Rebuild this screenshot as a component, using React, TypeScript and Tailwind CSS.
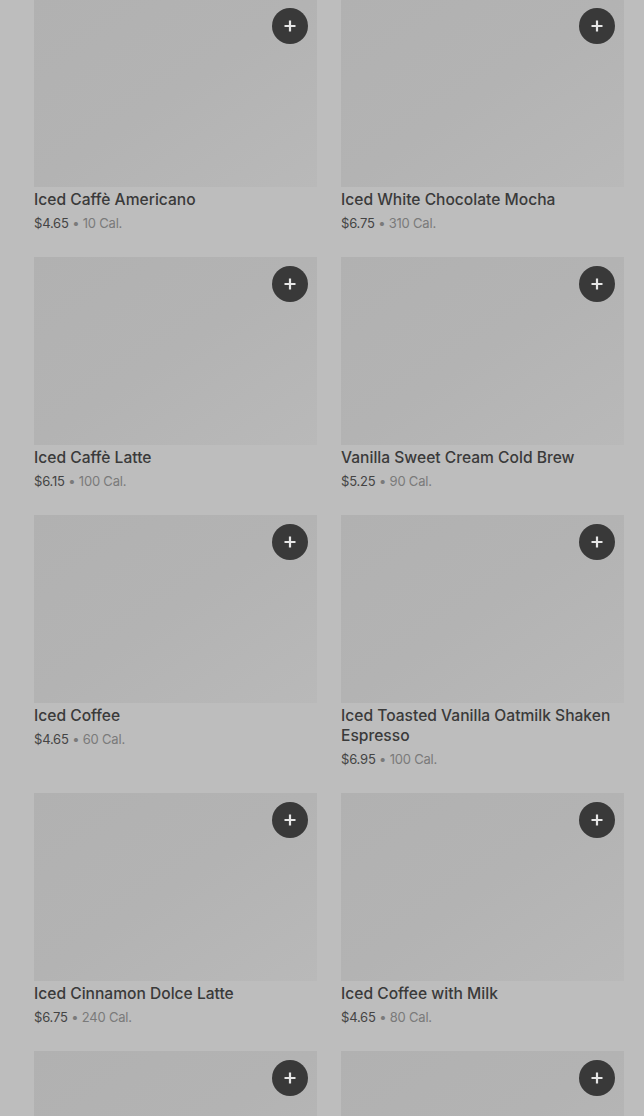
import React from "react";

type Item = { name: string; price: string; cal: string };

const items: Item[] = [
	{ name: "Iced Caffè Americano", price: "$4.65", cal: "10 Cal." },
	{ name: "Iced White Chocolate Mocha", price: "$6.75", cal: "310 Cal." },
	{ name: "Iced Caffè Latte", price: "$6.15", cal: "100 Cal." },
	{ name: "Vanilla Sweet Cream Cold Brew", price: "$5.25", cal: "90 Cal." },
	{ name: "Iced Coffee", price: "$4.65", cal: "60 Cal." },
	{ name: "Iced Toasted Vanilla Oatmilk Shaken Espresso", price: "$6.95", cal: "100 Cal." },
	{ name: "Iced Cinnamon Dolce Latte", price: "$6.75", cal: "240 Cal." },
	{ name: "Iced Coffee with Milk", price: "$4.65", cal: "80 Cal." },
];

function PlusIcon() {
	return (
		<svg width="14" height="14" viewBox="0 0 14 14" fill="none">
			<path d="M7 1.5v11M1.5 7h11" stroke="#e6e6e6" strokeWidth="2.2" />
		</svg>
	);
}

function AddButton() {
	return (
		<button className="absolute top-[9px] right-[9px] flex h-9 w-9 items-center justify-center rounded-full bg-[#393939]">
			<PlusIcon />
		</button>
	);
}

function ProductCard({ item }: { item: Item }) {
	return (
		<div className="flex flex-col">
			<div className="relative h-[188px] bg-gradient-to-br from-[#b1b1b1] via-[#b3b3b3] to-[#b9b9b9]">
				<AddButton />
			</div>
			<p className="mt-[3px] text-[15.6px] leading-5 font-medium text-[#3a3a3a]">
				{item.name}
			</p>
			<p className="mt-[3px] text-[13px] leading-5 tracking-[-0.2px] text-[#444]">
				{item.price}
				<span className="text-[#7a7a7a]"> • {item.cal}</span>
			</p>
		</div>
	);
}

export default function App() {
	return (
		<div
			className="h-[1116px] w-[644px] overflow-hidden bg-[#bdbdbd]"
			style={{ fontFamily: "Inter, 'Noto Sans', sans-serif" }}
		>
			{/* 商品グリッド */}
			<div className="-mt-px grid grid-cols-2 gap-x-6 gap-y-6 pl-[34px] pr-[20px]">
				{items.map((item) => (
					<ProductCard key={item.name} item={item} />
				))}
				{/* 画面下で切れている次の行 */}
				<div className="relative h-[188px] bg-gradient-to-br from-[#b1b1b1] via-[#b3b3b3] to-[#b9b9b9]">
					<AddButton />
				</div>
				<div className="relative h-[188px] bg-gradient-to-br from-[#b1b1b1] via-[#b3b3b3] to-[#b9b9b9]">
					<AddButton />
				</div>
			</div>
		</div>
	);
}
